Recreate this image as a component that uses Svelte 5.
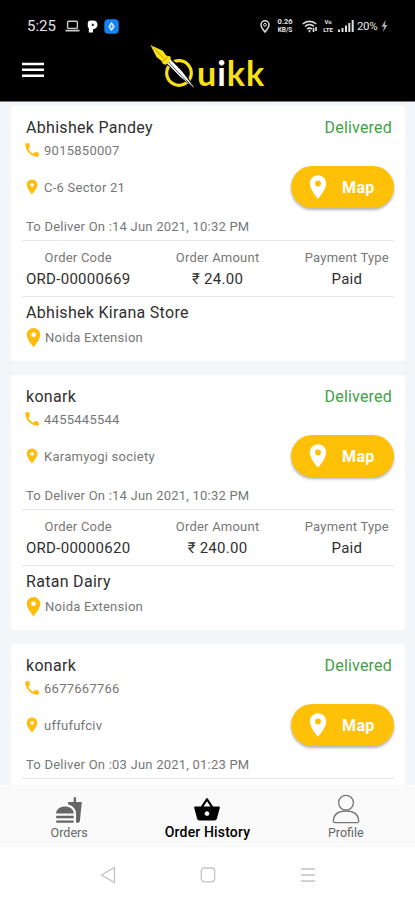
<script lang="ts">
  interface Order {
    customer: string;
    phone: string;
    address: string;
    deliverOn: string;
    code: string;
    amount: string;
    payment: string;
    store: string;
    area: string;
  }

  const pinPath = 'M12 2C8.13 2 5 5.13 5 9c0 5.25 7 13 7 13s7-7.75 7-13c0-3.87-3.13-7-7-7zm0 9.5a2.5 2.5 0 0 1 0-5 2.5 2.5 0 0 1 0 5z';

  const orders: Order[] = [
    {
      customer: 'Abhishek Pandey',
      phone: '9015850007',
      address: 'C-6 Sector 21',
      deliverOn: '14 Jun 2021, 10:32 PM',
      code: 'ORD-00000669',
      amount: '24.00',
      payment: 'Paid',
      store: 'Abhishek Kirana Store',
      area: 'Noida Extension'
    },
    {
      customer: 'konark',
      phone: '4455445544',
      address: 'Karamyogi society',
      deliverOn: '14 Jun 2021, 10:32 PM',
      code: 'ORD-00000620',
      amount: '240.00',
      payment: 'Paid',
      store: 'Ratan Dairy',
      area: 'Noida Extension'
    },
    {
      customer: 'konark',
      phone: '6677667766',
      address: 'uffufufciv',
      deliverOn: '03 Jun 2021, 01:23 PM',
      code: '',
      amount: '',
      payment: '',
      store: '',
      area: ''
    }
  ];
</script>

{#snippet pin(size: number)}
  <svg width={size} height={size} viewBox="0 0 24 24" fill="currentColor"><path d={pinPath} /></svg>
{/snippet}

<div class="screen">
  <header>
    <div class="status-bar">
      <div class="status-left">
        <span class="clock">5:25</span>
        <svg width="15" height="12" viewBox="0 0 15 12">
          <rect x="2.6" y="1.2" width="9.8" height="7.2" rx="1" fill="none" stroke="#ccc" stroke-width="1.4" />
          <path d="M0.5 10.6h14" stroke="#ccc" stroke-width="1.8" />
        </svg>
        <svg class="parking" width="11" height="13" viewBox="0 0 11 13">
          <path d="M.8 3C.8 1.500 2 .6 3.500.6h2.700C9 .6 10.500 2.300 10.500 4.800S8.800 9 6 9.200V12.400H1.800V8L.8 7.200z" fill="#fff" />
          <path d="M4.800 3.800h1.200a1.100 1.100 0 0 1 0 2.300H4.800z" fill="#333" />
        </svg>
        <svg class="app-badge" width="15" height="15" viewBox="0 0 15 15">
          <rect x="0.3" y="0.3" width="14.4" height="14.4" rx="4" fill="#1683f5" />
          <path d="M7.500 2.800 10.800 7.500 7.500 12.200 4.200 7.500z" fill="#d5ebff" />
          <path d="M7.500 5.500v4M5.800 7.500h3.400" stroke="#1683f5" stroke-width="0.7" />
        </svg>
      </div>
      <div class="status-right">
        <svg width="10" height="13" viewBox="0 0 10 13" fill="none" stroke="#ddd">
          <path d="M5 12C3 9.500 1 7.500 1 4.800a4 4 0 0 1 8 0C9 7.500 7 9.500 5 12z" stroke-width="1.500" />
          <circle cx="5" cy="4.800" r="1.400" />
        </svg>
        <span class="speed"><b>0.26</b><b>KB/S</b></span>
        <svg class="wifi" width="16" height="13" viewBox="0 0 16 13" fill="none" stroke="#ddd" stroke-width="1.700">
          <path d="M.8 4C4.500.4 10.500.4 14.200 4M3 6.500c2.600-2.400 6.400-2.400 9 0M5.200 9c1.400-1.200 3.200-1.200 4.600 0" />
          <path d="M7.500 10v2.200M11.500 8v4M14 7v4" />
        </svg>
        <span class="volte"><b>Vo</b><b>LTE</b></span>
        <svg class="signal" width="16" height="12" viewBox="0 0 16 12" fill="#ddd">
          <path d="M0 9.500h2V12H0zM3.500 8h2v4h-2zM7 5.500h2V12H7zM10.300 3h2v9h-2zM13.700 0h2v12h-2z" />
        </svg>
        <span class="battery">20%</span>
        <svg class="bolt" width="7" height="12" viewBox="0 0 7 12" fill="#aaa"><path d="M4.500 0 .5 6.800h2.600L2 12l4.500-7H4z" /></svg>
      </div>
    </div>

    <div class="app-bar">
      <svg class="menu" width="22" height="16" viewBox="0 0 22 16" stroke="#fff" stroke-width="2.500">
        <path d="M0 1.900h22M0 7.800h22M0 13.700h22" />
      </svg>
      <div class="logo">
        <svg width="46" height="46" viewBox="0 0 46 46">
          <circle cx="29" cy="29" r="12.300" fill="none" stroke="#f8df16" stroke-width="3.200" />
          <path d="M15 18.500 20 13 34 26.500 44.500 44 31 34.500z" fill="#000" />
          <path d="M16.500 18.800 20 15 32.500 28 44.500 44 30.500 33z" fill="#fff" />
          <path d="M18 17.500 33 33.500 42 41.500" fill="none" stroke="#555" stroke-width="1" />
          <path d="M.5 1 12.800 6.800 16.200 11.400 20.500 12.600 20.800 15.800 16 20.800 13 20 11.500 17 6.500 13z" fill="#f8df16" />
          <path d="M1.500 1.500 14 14.500M12.500 17.500 18 12.500" stroke="#a48d10" stroke-width="0.700" />
        </svg>
        <span class="word">u<i>i</i>kk</span>
      </div>
    </div>
  </header>

  <main>
    {#each orders as order}
      <article class="card">
        <div class="row top">
          <span class="name">{order.customer}</span>
          <span class="delivered">Delivered</span>
        </div>
        <div class="contact">
          <svg class="phone" width="18" height="18" viewBox="0 0 24 24" fill="currentColor">
            <path d="M20.010 15.380c-1.230 0-2.420-.2-3.530-.56a.98.98 0 0 0-1.010.24l-1.570 1.970c-2.830-1.350-5.480-3.900-6.890-6.830l1.950-1.660c.27-.28.35-.67.24-1.020-.37-1.110-.56-2.300-.56-3.530 0-.54-.45-.99-.99-.99H4.190C3.650 3 3 3.240 3 3.990 3 13.280 10.730 21 20.010 21c.71 0 .99-.63.99-1.180v-3.450c0-.54-.45-.99-.99-.99z" />
          </svg>
          <span>{order.phone}</span>
        </div>
        <div class="row address">
          <div class="contact">
            {@render pin(18)}
            <span>{order.address}</span>
          </div>
          <button class="map">
            {@render pin(28)}
            <span>Map</span>
          </button>
        </div>
        <div class="deliver">To Deliver On :{order.deliverOn}</div>

        <div class="facts">
          {#if order.code}
            <div class="fact">
              <span class="label">Order Code</span>
              <span class="value">{order.code}</span>
            </div>
            <div class="fact">
              <span class="label">Order Amount</span>
              <span class="value">₹ {order.amount}</span>
            </div>
            <div class="fact">
              <span class="label">Payment Type</span>
              <span class="value">{order.payment}</span>
            </div>
          {/if}
        </div>

        {#if order.store}
          <div class="store">{order.store}</div>
          <div class="contact area">
            {@render pin(23)}
            <span>{order.area}</span>
          </div>
        {/if}
      </article>
    {/each}
  </main>

  <nav class="tabs">
    <div class="tab">
      <svg width="28" height="28" viewBox="0 0 24 24" fill="#666">
        <path d="M18.060 22.990h1.660c.84 0 1.530-.64 1.630-1.460L23 5.050h-5V1h-1.970v4.050h-4.970l.3 2.340c1.710.47 3.310 1.320 4.270 2.260 1.440 1.420 2.430 2.890 2.430 5.290v8.050zM1 21.990V21h15.030v.99c0 .55-.45 1-1.010 1H2.010c-.56 0-1.010-.45-1.010-1zM16.030 14.990c0-8-15.030-8-15.030 0h15.030zM1.020 17h15v2h-15z" />
      </svg>
      <span>Orders</span>
    </div>
    <div class="tab active">
      <svg width="28" height="28" viewBox="0 0 24 24" fill="#000">
        <path d="M17.210 9l-4.380-6.560a.99.99 0 0 0-1.660.01L6.790 9H2c-.55 0-1 .45-1 1 0 .09.010.18.040.27l2.540 9.270c.23.84 1 1.460 1.920 1.460h13c.92 0 1.690-.62 1.930-1.460l2.540-9.270L23 10c0-.55-.45-1-1-1h-4.790zM9 9l3-4.400L15 9H9zm3 8c-1.100 0-2-.9-2-2s.9-2 2-2 2 .9 2 2-.9 2-2 2z" />
      </svg>
      <span>Order History</span>
    </div>
    <div class="tab">
      <svg width="28" height="30" viewBox="0 0 28 30" fill="none" stroke="#777" stroke-width="1.300">
        <circle cx="14" cy="8.800" r="7.400" />
        <path d="M1.300 26.800c.5-6.500 5-9.800 12.700-9.800s12.200 3.300 12.700 9.800c.1 1.200-.5 1.800-1.600 1.800H2.900c-1.100 0-1.700-.6-1.600-1.800z" />
      </svg>
      <span>Profile</span>
    </div>
  </nav>

  <div class="system-nav">
    <svg width="16" height="18" viewBox="0 0 16 18"><path d="M14.500 1.500v15L1.500 9z" /></svg>
    <svg width="16" height="18" viewBox="0 0 16 18"><rect x="1.300" y="2" width="13.400" height="13.800" rx="3" /></svg>
    <svg width="16" height="18" viewBox="0 0 16 18"><path d="M1 3h14M1 9h14M1 15h14" /></svg>
  </div>
</div>

<style>
  :global(body) {
    margin: 0;
    background: #fff;
  }

  .screen {
    width: 415px;
    height: 900px;
    display: flex;
    flex-direction: column;
    overflow: hidden;
    font-family: Roboto, "Noto Sans", sans-serif;
    color: #303030;
  }

  svg {
    display: block;
    flex-shrink: 0;
  }

  header {
    height: 101px;
    flex-shrink: 0;
    background: #000;
    border-bottom: 1px solid #777;
  }

  .status-bar {
    height: 40px;
    padding: 12px 27px 0 27px;
    box-sizing: border-box;
    display: flex;
    justify-content: space-between;
    color: #e4e4e4;
  }

  .status-left,
  .status-right {
    display: flex;
    align-items: center;
    height: 28px;
  }

  .clock {
    width: 38px;
    font-size: 15px;
  }

  .parking {
    margin-left: 7px;
  }

  .app-badge {
    margin-left: 6px;
  }

  .speed,
  .volte {
    display: flex;
    flex-direction: column;
    align-items: center;
  }

  .speed {
    width: 18px;
    margin-left: 6px;
    font-size: 7.5px;
    line-height: 8px;
  }

  .speed b:last-child {
    font-size: 6.5px;
    line-height: 8px;
  }

  .wifi {
    margin-left: 8px;
  }

  .volte {
    width: 10px;
    margin-left: 5px;
    font-size: 6px;
    line-height: 8px;
  }

  .signal {
    margin-left: 5px;
  }

  .battery {
    margin-left: 3px;
    width: 22px;
    font-size: 11.5px;
    letter-spacing: -0.4px;
  }

  .bolt {
    margin-left: 2px;
  }

  .app-bar {
    height: 61px;
    display: flex;
    align-items: flex-start;
    padding-left: 22px;
  }

  .menu {
    margin-top: 22px;
  }

  .logo {
    display: flex;
    margin: 4px 0 0 106px;
  }

  .word {
    margin: 8px 0 0 1px;
    font: 700 34px/42px Lato, sans-serif;
    letter-spacing: 1px;
    color: #f8df16;
  }

  .word i {
    font-style: normal;
    color: #fff;
  }

  main {
    flex: 1;
    min-height: 0;
    padding: 4px 10px 0 11px;
    display: flex;
    flex-direction: column;
    gap: 14px;
    background: #f2f6f9;
    overflow: hidden;
  }

  .card {
    height: 255px;
    flex-shrink: 0;
    padding: 11px 11px 0 11px;
    box-sizing: border-box;
    background: #fff;
    border-radius: 4px;
  }

  .row {
    display: flex;
    justify-content: space-between;
    align-items: center;
  }

  .top {
    height: 22px;
    padding: 0 2px 0 4px;
    font-size: 16px;
    line-height: 22px;
  }

  .name,
  .store {
    letter-spacing: 0.3px;
  }

  .delivered {
    color: #43a047;
    letter-spacing: 0.2px;
  }

  .contact {
    display: flex;
    align-items: center;
    gap: 3px;
    height: 22px;
    padding-left: 1px;
    font-size: 13px;
    letter-spacing: 0.26px;
    color: #777;
  }

  .contact svg {
    color: #ffbc0b;
  }

  .address {
    height: 52px;
  }

  .map {
    display: flex;
    align-items: center;
    gap: 10px;
    width: 103px;
    height: 42px;
    padding: 0 0 0 13px;
    border: 0;
    border-radius: 21px;
    background: #ffc107;
    box-shadow: 0 2px 3px rgba(0, 0, 0, 0.3);
    color: #fff;
    font: 700 16px Roboto, sans-serif;
    letter-spacing: 0.4px;
  }

  .deliver {
    height: 27px;
    padding-left: 4px;
    font-size: 13px;
    line-height: 28px;
    letter-spacing: 0.22px;
    color: #777;
  }

  .facts {
    height: 55px;
    border-top: 1px solid #e7e7e7;
    border-bottom: 1px solid #e7e7e7;
    display: flex;
    justify-content: space-between;
    padding: 0 5px 0 4px;
  }

  .fact {
    display: flex;
    flex-direction: column;
    align-items: center;
    padding-top: 7px;
  }

  .label {
    font-size: 13px;
    line-height: 20px;
    letter-spacing: 0.22px;
    color: #777;
  }

  .value {
    font-size: 15px;
    line-height: 22px;
    letter-spacing: 0.28px;
  }

  .store {
    padding: 5px 4px 0;
    font-size: 16px;
    line-height: 22px;
  }

  .area {
    gap: 0;
    height: 26px;
    padding-left: 0;
  }

  .tabs {
    height: 62px;
    flex-shrink: 0;
    display: flex;
    background: #fafafa;
  }

  .tab {
    flex: 1;
    display: flex;
    flex-direction: column;
    align-items: center;
    justify-content: flex-end;
    padding-bottom: 6px;
    font-size: 12.5px;
    line-height: 17px;
    color: #666;
  }

  .active {
    font-size: 14px;
    font-weight: 500;
    letter-spacing: 0.15px;
    color: #000;
  }

  .system-nav {
    height: 53px;
    flex-shrink: 0;
    display: flex;
    justify-content: center;
    align-items: center;
    gap: 84px;
    padding-top: 2px;
    box-sizing: border-box;
    background: #fff;
  }

  .system-nav svg {
    fill: none;
    stroke: #c4c4c4;
    stroke-width: 1.3;
  }
</style>
